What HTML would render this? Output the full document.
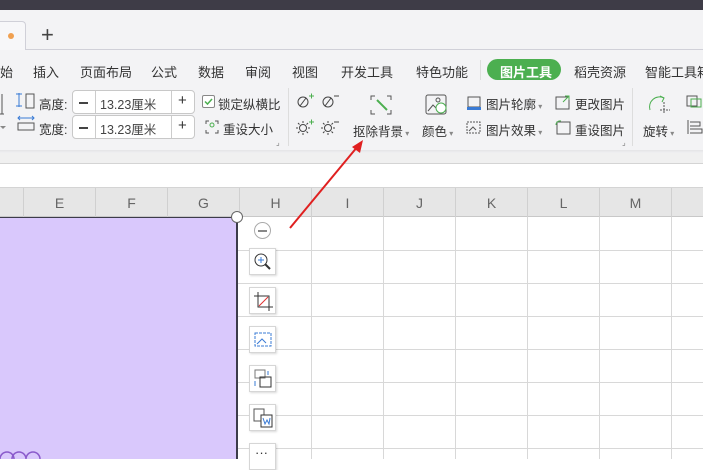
<!DOCTYPE html>
<html><head><meta charset="utf-8"><style>
*{margin:0;padding:0;box-sizing:border-box}
body{width:703px;height:459px;overflow:hidden;background:#fff;font-family:"Liberation Sans","Noto Sans CJK SC",sans-serif;position:relative;font-size:12px;color:#333}
.a{position:absolute}
.t{position:absolute;white-space:nowrap}
.box{position:absolute;border:1px solid #c8c8c8;border-radius:4px;background:#fff;height:24px}
.cl{position:absolute;top:188px;height:29px;width:72px;border-right:1px solid #d0d0d0;text-align:center;line-height:30px;font-size:14px;color:#666}
.vl{position:absolute;width:1px;background:#d8d8d8;top:217px;height:242px}
.hl{position:absolute;height:1px;background:#d8d8d8;left:238px;width:465px}
.sb{position:absolute;left:249px;width:27px;height:27px;background:#fff;border:1px solid #d6d6d6;box-shadow:1px 1px 2px rgba(0,0,0,.15)}
</style></head><body>
<div class="a" style="left:0;top:0;width:703px;height:10px;background:#3e3c47"></div>
<div class="a" style="left:0;top:10px;width:703px;height:143px;background:#f3f3f5"></div>
<div class="a" style="left:0;top:21px;width:26px;height:29px;background:#f7f7f9;border:1px solid #d0d0d8;border-bottom:none;border-left:none;border-radius:0 4px 0 0"></div>
<div class="a" style="left:26px;top:49px;width:677px;height:1px;background:#d0d0d8"></div>
<div class="a" style="left:8px;top:33px;width:6px;height:6px;border-radius:50%;background:#f0a050"></div>
<div class="t" style="left:41px;top:22px;font-size:22px;color:#444">+</div>
<div class="t" style="top:62px;left:0;font-size:13px;color:#333">始</div>
<div class="t" style="top:62px;left:33px;font-size:13px">插入</div>
<div class="t" style="top:62px;left:80px;font-size:13px">页面布局</div>
<div class="t" style="top:62px;left:151px;font-size:13px">公式</div>
<div class="t" style="top:62px;left:198px;font-size:13px">数据</div>
<div class="t" style="top:62px;left:245px;font-size:13px">审阅</div>
<div class="t" style="top:62px;left:292px;font-size:13px">视图</div>
<div class="t" style="top:62px;left:341px;font-size:13px">开发工具</div>
<div class="t" style="top:62px;left:416px;font-size:13px">特色功能</div>
<div class="a" style="left:480px;top:60px;width:1px;height:20px;background:#ddd"></div>
<div class="a" style="left:487px;top:59px;width:74px;height:21px;border-radius:11px;background:#4caf50"></div>
<div class="t" style="top:62px;left:500px;font-size:13px;color:#fff;font-weight:bold">图片工具</div>
<div class="t" style="top:62px;left:574px;font-size:13px">稻壳资源</div>
<div class="t" style="top:62px;left:645px;font-size:13px">智能工具箱</div>
<svg class="a" style="left:0;top:90px" width="40" height="50"><path d="M2 4v20M-2 24h6" stroke="#555" fill="none"/><path d="M19 3v14M16 4h6M16 16h6" stroke="#3a7bd5" fill="none"/><rect x="26" y="4" width="8" height="14" fill="none" stroke="#555"/><path d="M18 28h16M20 26l-2 2 2 2M32 26l2 2-2 2" stroke="#3a7bd5" fill="none"/><rect x="18" y="33" width="16" height="7" fill="none" stroke="#555"/><path d="M0 36l3 3 3-3" fill="#888"/></svg>
<div class="t" style="top:94px;left:39px;font-size:12.5px">高度:</div>
<div class="t" style="top:119px;left:39px;font-size:12.5px">宽度:</div>
<div class="box" style="left:72px;top:90px;width:123px"></div>
<div class="box" style="left:72px;top:115px;width:123px"></div>
<div class="a" style="left:95px;top:91px;width:1px;height:22px;background:#ccc"></div>
<div class="a" style="left:171px;top:91px;width:1px;height:22px;background:#ccc"></div>
<div class="a" style="left:95px;top:116px;width:1px;height:22px;background:#ccc"></div>
<div class="a" style="left:171px;top:116px;width:1px;height:22px;background:#ccc"></div>
<div class="a" style="left:79px;top:102px;width:9px;height:1.5px;background:#444"></div>
<div class="a" style="left:79px;top:127px;width:9px;height:1.5px;background:#444"></div>
<div class="t" style="top:92px;left:178px;font-size:15px">+</div><div class="t" style="top:117px;left:178px;font-size:15px">+</div>
<div class="t" style="top:94px;left:100px;font-size:12.5px;color:#444">13.23厘米</div>
<div class="t" style="top:119px;left:100px;font-size:12.5px;color:#444">13.23厘米</div>
<div class="a" style="left:202px;top:95px;width:13px;height:13px;border:1px solid #888;border-radius:2px;background:#fff"></div>
<svg class="a" style="left:202px;top:95px" width="13" height="13"><path d="M3 6.5l2.5 2.5 4.5-5" stroke="#4caf50" stroke-width="1.5" fill="none"/></svg>
<div class="t" style="top:94px;left:218px;font-size:12.5px">锁定纵横比</div>
<svg class="a" style="left:204px;top:119px" width="16" height="16"><path d="M2 5V2h3M11 2h3v3M14 11v3h-3M5 14H2v-3" stroke="#555" fill="none"/><circle cx="8" cy="6" r="2" fill="none" stroke="#4caf50"/></svg>
<div class="t" style="top:119px;left:223px;font-size:12.5px">重设大小</div>
<div class="t" style="top:138px;left:276px;font-size:8px;color:#777">⌟</div>
<div class="a" style="left:288px;top:88px;width:1px;height:58px;background:#ddd"></div>
<svg class="a" style="left:296px;top:92px" width="50" height="45">
<g stroke="#444" fill="none"><circle cx="7" cy="10" r="5"/><path d="M4 14l6-8"/><circle cx="32" cy="10" r="5"/><path d="M29 14l6-8"/>
<circle cx="7" cy="36" r="3.5"/><path d="M7 29v2M7 41v2M0 36h2M12 36h2M2 31l1.5 1.5M12 31l-1.5 1.5M2 41l1.5-1.5M12 41l-1.5-1.5"/>
<circle cx="32" cy="36" r="3.5"/><path d="M32 29v2M32 41v2M25 36h2M37 36h2M27 31l1.5 1.5M37 31l-1.5 1.5M27 41l1.5-1.5M37 41l-1.5-1.5"/>
<path d="M38 4h5M38 30h5"/></g>
<path d="M13 4h5M15.5 1.5v5M13 30h5M15.5 27.5v5" stroke="#4caf50" fill="none"/></svg>
<svg class="a" style="left:369px;top:94px" width="24" height="22"><path d="M2 6V2h4M18 2h4v4M22 16v4h-4M6 20H2v-4" stroke="#555" fill="none"/><path d="M8 6l10 10" stroke="#4caf50" stroke-width="2"/></svg>
<div class="t" style="top:121px;left:353px;font-size:12.5px">抠除背景<span style="font-size:8px;color:#888"> ▾</span></div>
<svg class="a" style="left:425px;top:94px" width="24" height="22"><rect x="1" y="1" width="20" height="19" rx="2" fill="none" stroke="#555"/><path d="M3 17l5-6 4 4" stroke="#555" fill="none"/><circle cx="16" cy="14" r="5" fill="#fff" stroke="#4caf50"/><circle cx="13" cy="6" r="2" fill="none" stroke="#555"/></svg>
<div class="t" style="top:121px;left:422px;font-size:12.5px">颜色<span style="font-size:8px;color:#888"> ▾</span></div>
<svg class="a" style="left:467px;top:96px" width="14" height="14"><rect x="1" y="1" width="12" height="10" fill="none" stroke="#555"/><rect x="0" y="11" width="14" height="3" fill="#3a7bd5"/></svg>
<div class="t" style="top:94px;left:486px;font-size:12.5px">图片轮廓<span style="font-size:8px;color:#888"> ▾</span></div>
<svg class="a" style="left:466px;top:121px" width="16" height="14"><rect x="1" y="1" width="13" height="11" fill="none" stroke="#555" stroke-dasharray="2 1"/><path d="M3 10l4-4 3 3" stroke="#555" fill="none"/></svg>
<div class="t" style="top:120px;left:486px;font-size:12.5px">图片效果<span style="font-size:8px;color:#888"> ▾</span></div>
<svg class="a" style="left:555px;top:95px" width="16" height="16"><rect x="1" y="2" width="13" height="12" fill="none" stroke="#555"/><path d="M8 7l6-6M10 1h4v4" stroke="#4caf50" fill="none"/></svg>
<div class="t" style="top:94px;left:575px;font-size:12.5px">更改图片</div>
<svg class="a" style="left:555px;top:120px" width="16" height="16"><rect x="2" y="2" width="13" height="12" fill="none" stroke="#555"/><path d="M1 5a4 4 0 0 1 5-4" stroke="#4caf50" fill="none"/></svg>
<div class="t" style="top:120px;left:575px;font-size:12.5px">重设图片</div>
<div class="t" style="top:138px;left:622px;font-size:8px;color:#777">⌟</div>
<div class="a" style="left:632px;top:88px;width:1px;height:58px;background:#ddd"></div>
<svg class="a" style="left:648px;top:94px" width="24" height="22"><path d="M2 16a10 10 0 0 1 14-12" stroke="#4caf50" fill="none"/><path d="M12 2l4 2-2 4" stroke="#4caf50" fill="none"/><path d="M16 8v12M12 16h10" stroke="#555" stroke-dasharray="2 1" fill="none"/></svg>
<div class="t" style="top:121px;left:643px;font-size:12.5px">旋转<span style="font-size:8px;color:#888"> ▾</span></div>
<svg class="a" style="left:686px;top:94px" width="17" height="44"><rect x="1" y="2" width="10" height="10" fill="none" stroke="#555"/><rect x="5" y="5" width="10" height="8" fill="none" stroke="#4caf50"/><path d="M2 26v14M4 28h10v4H4M4 35h12v4H4" stroke="#555" fill="none"/></svg>
<div class="a" style="left:0;top:150px;width:703px;height:3px;background:linear-gradient(#e4e4e6,#f0f0f2)"></div>
<div class="a" style="left:0;top:153px;width:703px;height:11px;background:#f0f0f0;border-bottom:1px solid #d4d4d4"></div>
<div class="a" style="left:0;top:164px;width:703px;height:24px;background:#fff;border-bottom:1px solid #d4d4d4"></div>
<div class="a" style="left:0;top:188px;width:703px;height:29px;background:#e6e6e6;border-bottom:1px solid #c8c8c8"></div>
<div class="cl" style="left:-48px"></div>
<div class="cl" style="left:24px">E</div><div class="cl" style="left:96px">F</div><div class="cl" style="left:168px">G</div>
<div class="cl" style="left:240px">H</div><div class="cl" style="left:312px">I</div><div class="cl" style="left:384px">J</div>
<div class="cl" style="left:456px">K</div><div class="cl" style="left:528px">L</div><div class="cl" style="left:600px">M</div>
<div class="cl" style="left:672px"></div>
<div class="vl" style="left:311px"></div><div class="vl" style="left:383px"></div><div class="vl" style="left:455px"></div>
<div class="vl" style="left:527px"></div><div class="vl" style="left:599px"></div><div class="vl" style="left:671px"></div>
<div class="hl" style="top:250px"></div><div class="hl" style="top:283px"></div><div class="hl" style="top:316px"></div>
<div class="hl" style="top:349px"></div><div class="hl" style="top:382px"></div><div class="hl" style="top:415px"></div><div class="hl" style="top:448px"></div>
<div class="a" style="left:0;top:217px;width:238px;height:242px;background:#d9c8fc;border-right:2px solid #3c3c4a;border-top:1px solid #3c3c4a"></div>
<div class="a" style="left:231px;top:211px;width:12px;height:12px;border-radius:50%;background:#fff;border:1px solid #666"></div>
<svg class="a" style="left:0;top:448px" width="50" height="11"><path d="M0 11a7 7 0 0 1 14 0M12 11a7 7 0 0 1 14 0M26 11a7 7 0 0 1 14 0" stroke="#8a5acb" stroke-width="1.5" fill="none"/></svg>
<div class="a" style="left:254px;top:222px;width:17px;height:17px;border-radius:50%;border:1px solid #aaa;background:#fff"></div>
<div class="a" style="left:258px;top:230px;width:9px;height:2px;background:#888"></div>
<div class="sb" style="top:248px"></div><div class="sb" style="top:287px"></div><div class="sb" style="top:326px"></div>
<div class="sb" style="top:365px"></div><div class="sb" style="top:404px"></div><div class="sb" style="top:443px"></div>
<svg class="a" style="left:249px;top:248px" width="28" height="28"><circle cx="12" cy="12" r="6" fill="none" stroke="#333"/><path d="M12 9v6M9 12h6" stroke="#3a7bd5"/><path d="M16 16l5 5" stroke="#333" stroke-width="2"/></svg>
<svg class="a" style="left:249px;top:287px" width="28" height="28"><path d="M9 5v15h15M5 9h15v15" stroke="#333" fill="none"/><path d="M10 19l9-9" stroke="#e03030"/></svg>
<svg class="a" style="left:249px;top:326px" width="28" height="28"><rect x="6" y="7" width="16" height="13" fill="none" stroke="#3a7bd5" stroke-dasharray="3 1"/><path d="M8 18l5-5 4 4" stroke="#3a7bd5" fill="none"/></svg>
<svg class="a" style="left:249px;top:365px" width="28" height="28"><rect x="6" y="5" width="10" height="8" fill="none" stroke="#777"/><rect x="11" y="12" width="11" height="10" fill="none" stroke="#333"/><path d="M19 6v4M6 16v5" stroke="#3a7bd5"/></svg>
<svg class="a" style="left:249px;top:404px" width="28" height="28"><rect x="5" y="5" width="10" height="12" fill="none" stroke="#555"/><rect x="12" y="11" width="11" height="12" fill="#fff" stroke="#333"/><path d="M14 14l2 6 2-4 2 4 1-6" stroke="#3a7bd5" fill="none"/></svg>
<div class="t" style="left:255px;top:445px;font-size:13px;color:#333">···</div>
<svg class="a" style="left:285px;top:140px" width="80" height="92"><path d="M5 88L73 6" stroke="#e02020" stroke-width="2"/><path d="M78 0l-3 13-8-6z" fill="#e02020"/></svg>
</body></html>
